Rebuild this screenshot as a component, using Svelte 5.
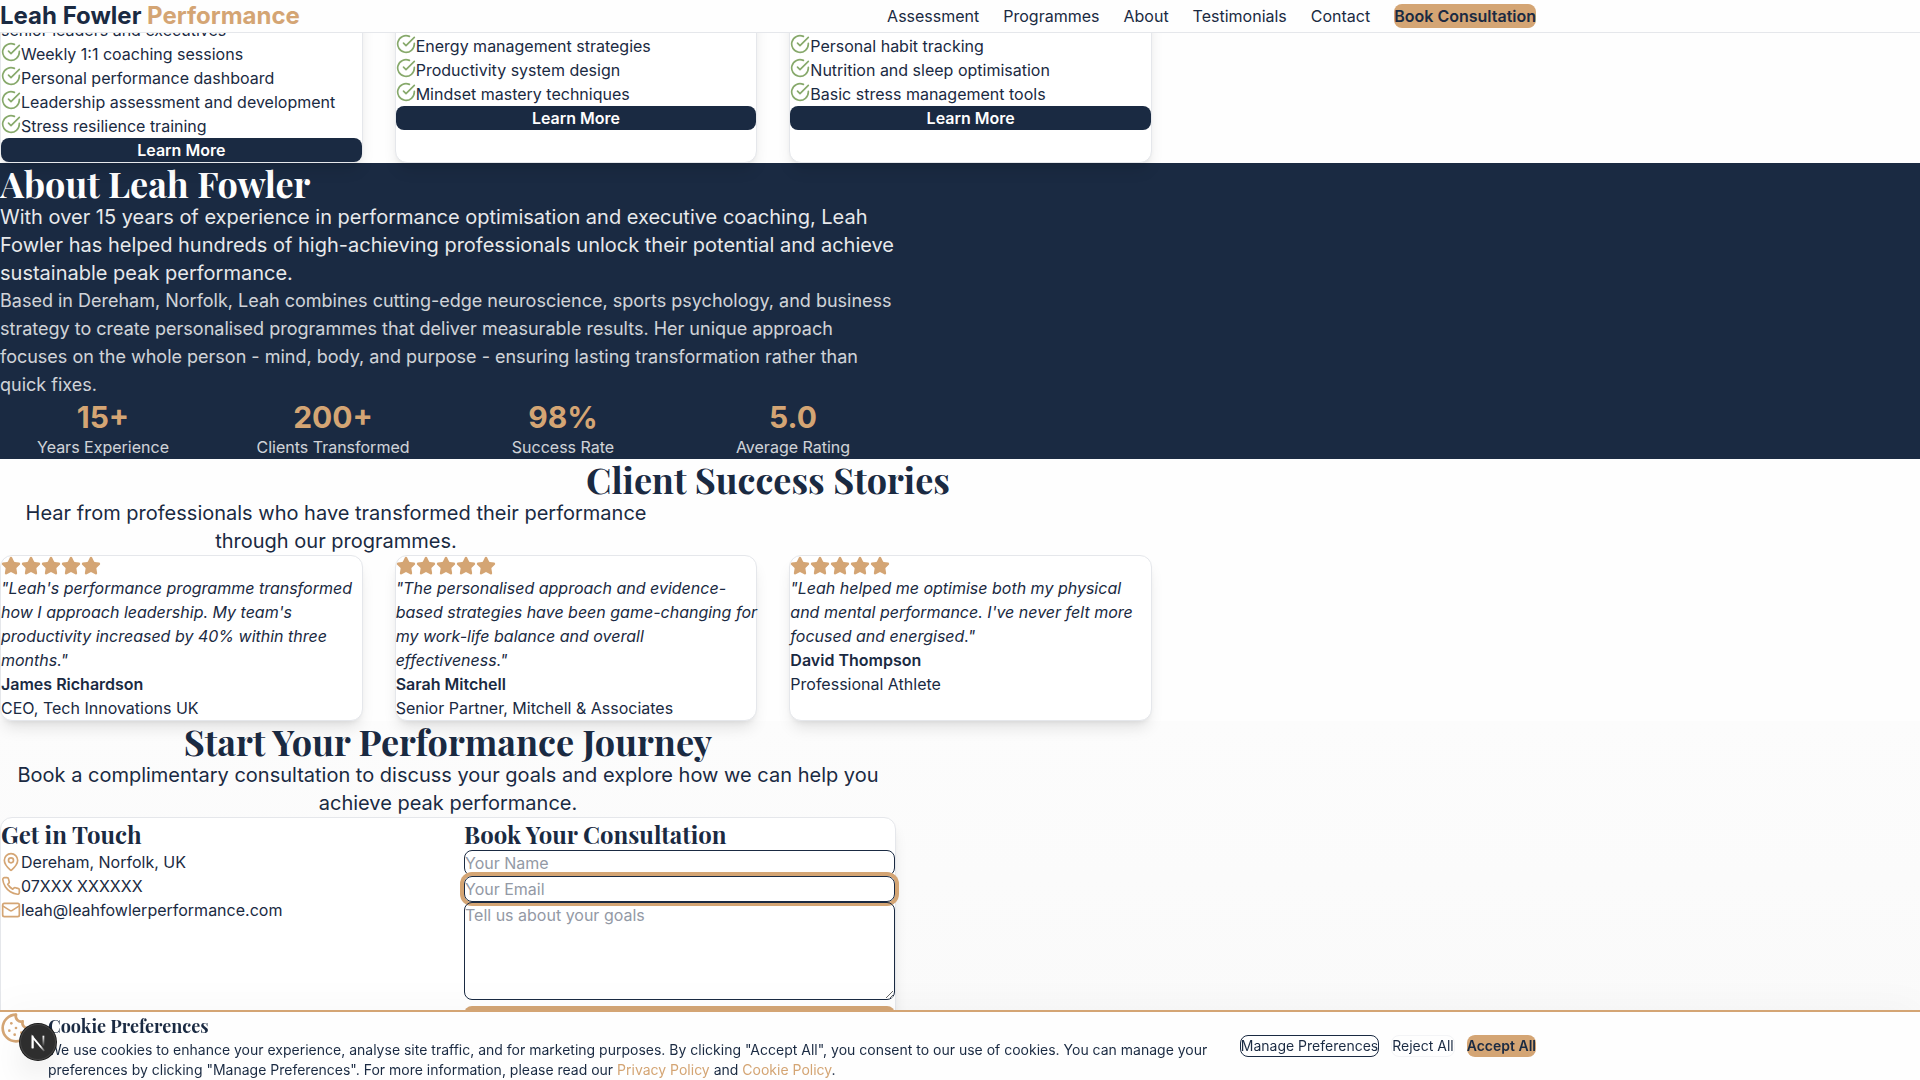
<script>
  const links = ['Assessment', 'Programmes', 'About', 'Testimonials', 'Contact'];

  const programmes = [
    {
      name: 'executive',
      intro: 'senior leaders and executives',
      items: [
        'Weekly 1:1 coaching sessions',
        'Personal performance dashboard',
        'Leadership assessment and development',
        'Stress resilience training'
      ]
    },
    {
      name: 'professional',
      intro: '',
      items: ['Energy management strategies', 'Productivity system design', 'Mindset mastery techniques']
    },
    {
      name: 'foundation',
      intro: '',
      items: ['Personal habit tracking', 'Nutrition and sleep optimisation', 'Basic stress management tools']
    }
  ];

  const stats = [
    { value: '15+', label: 'Years Experience' },
    { value: '200+', label: 'Clients Transformed' },
    { value: '98%', label: 'Success Rate' },
    { value: '5.0', label: 'Average Rating' }
  ];

  const stories = [
    {
      quote: "\"Leah's performance programme transformed how I approach leadership. My team's productivity increased by 40% within three months.\"",
      author: 'James Richardson',
      role: 'CEO, Tech Innovations UK'
    },
    {
      quote: '"The personalised approach and evidence-based strategies have been game-changing for my work-life balance and overall effectiveness."',
      author: 'Sarah Mitchell',
      role: 'Senior Partner, Mitchell & Associates'
    },
    {
      quote: '"Leah helped me optimise both my physical and mental performance. I\'ve never felt more focused and energised."',
      author: 'David Thompson',
      role: 'Professional Athlete'
    }
  ];
</script>

<div class="page">
  <header class="topbar">
    <div class="container topbar-row">
      <a class="brand" href="#top">Leah Fowler <span>Performance</span></a>
      <nav>
        {#each links as link}
          <a href={'#' + link.toLowerCase()}>{link}</a>
        {/each}
        <button class="gold" type="button">Book Consultation</button>
      </nav>
    </div>
  </header>

  <main>
    <section class="programmes" id="programmes">
      <div class="cards">
        {#each programmes as p}
          <article class="card programme" class:featured={p.intro}>
            <p class="intro">{p.intro}</p>
            <ul>
              {#each p.items as item}
                <li>
                  <svg class="icon sage" viewBox="0 0 24 24" aria-hidden="true">
                    <path d="M22 11.08V12a10 10 0 1 1-5.93-9.14" />
                    <path d="m9 11 3 3L22 4" />
                  </svg>
                  <span>{item}</span>
                </li>
              {/each}
            </ul>
            <button class="navy" type="button">Learn More</button>
          </article>
        {/each}
      </div>
    </section>

    <section class="about" id="about">
      <div class="narrow">
        <h2>About Leah Fowler</h2>
        <p class="lead">
          With over 15 years of experience in performance optimisation and executive coaching, Leah Fowler has helped
          hundreds of high-achieving professionals unlock their potential and achieve sustainable peak performance.
        </p>
        <p class="body">
          Based in Dereham, Norfolk, Leah combines cutting-edge neuroscience, sports psychology, and business strategy
          to create personalised programmes that deliver measurable results. Her unique approach focuses on the whole
          person - mind, body, and purpose - ensuring lasting transformation rather than quick fixes.
        </p>
        <div class="stats">
          {#each stats as s}
            <div>
              <div class="value">{s.value}</div>
              <div class="label">{s.label}</div>
            </div>
          {/each}
        </div>
      </div>
    </section>

    <section class="stories" id="testimonials">
      <div class="container center">
        <h2>Client Success Stories</h2>
        <p class="lead blurb">Hear from professionals who have transformed their performance through our programmes.</p>
      </div>
      <div class="cards">
        {#each stories as s}
          <article class="card">
            <div class="stars" role="img" aria-label="5 out of 5 stars">
              {#each Array(5) as _}
                <svg class="icon star" viewBox="0 0 24 24" aria-hidden="true">
                  <path d="M11.525 2.295a.53.53 0 0 1 .95 0l2.31 4.679a2.123 2.123 0 0 0 1.595 1.16l5.166.756a.53.53 0 0 1 .294.904l-3.736 3.638a2.123 2.123 0 0 0-.611 1.878l.882 5.14a.53.53 0 0 1-.771.56l-4.618-2.428a2.122 2.122 0 0 0-1.973 0L6.396 21.01a.53.53 0 0 1-.77-.56l.881-5.139a2.122 2.122 0 0 0-.611-1.879L2.16 9.795a.53.53 0 0 1 .294-.906l5.165-.755a2.122 2.122 0 0 0 1.597-1.16z" />
                </svg>
              {/each}
            </div>
            <p class="quote">{s.quote}</p>
            <div class="author">{s.author}</div>
            <div>{s.role}</div>
          </article>
        {/each}
      </div>
    </section>

    <section class="contact" id="contact">
      <div class="narrow">
        <div class="center">
          <h2>Start Your Performance Journey</h2>
          <p class="lead">
            Book a complimentary consultation to discuss your goals and explore how we can help you achieve peak
            performance.
          </p>
        </div>
        <div class="card contact-card">
          <div>
            <h3>Get in Touch</h3>
            <div class="detail">
              <svg class="icon tan" viewBox="0 0 24 24" aria-hidden="true">
                <path d="M20 10c0 4.993-5.539 10.193-7.399 11.799a1 1 0 0 1-1.202 0C9.539 20.193 4 14.993 4 10a8 8 0 0 1 16 0" />
                <circle cx="12" cy="10" r="3" />
              </svg>
              <span>Dereham, Norfolk, UK</span>
            </div>
            <div class="detail">
              <svg class="icon tan" viewBox="0 0 24 24" aria-hidden="true">
                <path d="M22 16.92v3a2 2 0 0 1-2.18 2 19.79 19.79 0 0 1-8.63-3.07 19.5 19.5 0 0 1-6-6 19.79 19.79 0 0 1-3.07-8.67A2 2 0 0 1 4.11 2h3a2 2 0 0 1 2 1.72 12.84 12.84 0 0 0 .7 2.81 2 2 0 0 1-.45 2.11L8.09 9.91a16 16 0 0 0 6 6l1.27-1.27a2 2 0 0 1 2.11-.45 12.84 12.84 0 0 0 2.81.7A2 2 0 0 1 22 16.92z" />
              </svg>
              <span>07XXX XXXXXX</span>
            </div>
            <div class="detail">
              <svg class="icon tan" viewBox="0 0 24 24" aria-hidden="true">
                <rect width="20" height="16" x="2" y="4" rx="2" />
                <path d="m22 7-8.97 5.7a1.94 1.94 0 0 1-2.06 0L2 7" />
              </svg>
              <span>leah@leahfowlerperformance.com</span>
            </div>
          </div>
          <form>
            <h3>Book Your Consultation</h3>
            <input type="text" placeholder="Your Name" aria-label="Your Name" />
            <input class="active" type="email" placeholder="Your Email" aria-label="Your Email" />
            <textarea rows="4" placeholder="Tell us about your goals" aria-label="Tell us about your goals"></textarea>
            <button class="gold" type="submit">Book Free Consultation</button>
          </form>
        </div>
      </div>
    </section>
  </main>

  <aside class="cookies" aria-label="Cookie Preferences">
    <div class="container cookie-row">
      <div class="cookie-copy">
        <svg class="cookie-icon tan" viewBox="0 0 24 24" aria-hidden="true">
          <path d="M12 2a10 10 0 1 0 10 10 4 4 0 0 1-5-5 4 4 0 0 1-5-5" />
          <path d="M8.5 8.5v.01" />
          <path d="M16 15.5v.01" />
          <path d="M12 12v.01" />
          <path d="M11 17v.01" />
          <path d="M7 14v.01" />
        </svg>
        <div>
          <h4>Cookie Preferences</h4>
          <p>
            We use cookies to enhance your experience, analyse site traffic, and for marketing purposes. By clicking
            "Accept All", you consent to our use of cookies. You can manage your preferences by clicking "Manage
            Preferences". For more information, please read our <a href="#privacy">Privacy Policy</a> and
            <a href="#cookie-policy">Cookie Policy</a>.
          </p>
        </div>
      </div>
      <div class="cookie-actions">
        <button class="outline" type="button">Manage Preferences</button>
        <button class="plain" type="button">Reject All</button>
        <button class="gold" type="button">Accept All</button>
      </div>
    </div>
  </aside>

  <button class="devtools" type="button" aria-label="Open dev tools">
    <svg viewBox="0 0 40 40" aria-hidden="true">
      <defs>
        <linearGradient id="n-diag" x1="20" y1="20" x2="29" y2="30" gradientUnits="userSpaceOnUse">
          <stop offset="0.4" stop-color="#fff" />
          <stop offset="1" stop-color="#fff" stop-opacity="0" />
        </linearGradient>
        <linearGradient id="n-stem" x1="27" y1="13" x2="27" y2="25" gradientUnits="userSpaceOnUse">
          <stop stop-color="#fff" />
          <stop offset="1" stop-color="#fff" stop-opacity="0" />
        </linearGradient>
      </defs>
      <path d="M14 27V14.5L27 30" fill="none" stroke="url(#n-diag)" stroke-width="2" />
      <path d="M14 27V13" stroke="#fff" stroke-width="2" />
      <path d="M26 13V26" stroke="url(#n-stem)" stroke-width="2" />
    </svg>
  </button>
</div>

<style>
  :global(body) {
    margin: 0;
    background: #fefefe;
  }

  .page {
    --navy: #1a2a42;
    --gold: #d4a574;
    --sage: #87a96b;
    --line: #e5e7eb;
    height: 100vh;
    overflow-y: auto;
    scrollbar-width: none;
    font-family: Inter, 'Liberation Sans', sans-serif;
    font-size: 16px;
    line-height: 24px;
    color: var(--navy);
    background: #fefefe;
    -webkit-font-smoothing: antialiased;
  }

  .page :is(h2, h3, h4, p, ul) {
    margin: 0;
    padding: 0;
  }

  .page :is(h2, h3, h4) {
    font-family: 'Playfair Display', 'Liberation Serif', serif;
    font-weight: 700;
  }

  h2 {
    font-size: 36px;
    line-height: 40px;
  }

  h3 {
    font-size: 24px;
    line-height: 32px;
  }

  a {
    color: inherit;
    text-decoration: none;
  }

  button,
  input,
  textarea {
    box-sizing: border-box;
    margin: 0;
    padding: 0;
    border: 0;
    border-radius: 8px;
    font: inherit;
    color: inherit;
    background: transparent;
  }

  button {
    cursor: pointer;
  }

  .gold {
    background: var(--gold);
    font-weight: 600;
  }

  .navy {
    background: var(--navy);
    color: #fefefe;
    font-weight: 600;
  }

  .container {
    max-width: 1536px;
  }

  .narrow {
    max-width: 896px;
  }

  .center {
    text-align: center;
  }

  .lead {
    font-size: 20px;
    line-height: 28px;
  }

  .icon {
    flex: none;
    width: 20px;
    height: 20px;
    fill: none;
    stroke-width: 2;
    stroke-linecap: round;
    stroke-linejoin: round;
  }

  .sage {
    stroke: var(--sage);
  }

  .tan {
    stroke: var(--gold);
  }

  .star {
    stroke: var(--gold);
    fill: var(--gold);
  }

  /* Header */
  .topbar {
    position: fixed;
    inset: 0 0 auto;
    z-index: 10;
    background: #fefefe;
    border-bottom: 1px solid var(--line);
  }

  .topbar-row {
    display: flex;
    align-items: center;
    justify-content: space-between;
  }

  .brand {
    font-size: 24px;
    line-height: 32px;
    font-weight: 700;
  }

  .brand span {
    color: var(--gold);
  }

  nav {
    display: flex;
    align-items: center;
    gap: 24px;
  }

  /* Cards */
  .cards {
    display: grid;
    grid-template-columns: repeat(3, 1fr);
    gap: 32px;
    max-width: 1152px;
  }

  .card {
    position: relative;
    border: 1px solid var(--line);
    border-radius: 12px;
    background: #fff;
    box-shadow:
      0 10px 15px -3px rgb(0 0 0 / 10%),
      0 4px 6px -4px rgb(0 0 0 / 10%);
  }

  .programme {
    padding-top: 9px;
  }

  .featured {
    padding-top: 17px;
  }

  .intro {
    min-height: 24px;
  }

  ul {
    list-style: none;
  }

  li,
  .detail,
  .stars {
    display: flex;
    align-items: flex-start;
  }

  .detail {
    align-items: center;
  }

  .programme button {
    display: block;
    width: 100%;
  }

  .page .quote {
    margin-right: -2px;
    font-style: italic;
  }

  .author {
    font-weight: 600;
  }

  /* About */
  .about {
    background: var(--navy);
    color: #fefefe;
  }

  .about .lead {
    opacity: 0.9;
  }

  .about .body {
    font-size: 18px;
    line-height: 28px;
    opacity: 0.8;
  }

  .stats {
    display: grid;
    grid-template-columns: repeat(4, 1fr);
    gap: 24px;
    text-align: center;
  }

  .value {
    font-size: 30px;
    line-height: 36px;
    font-weight: 700;
    color: var(--gold);
  }

  .label {
    opacity: 0.8;
  }

  .blurb {
    max-width: 672px;
  }

  /* Contact */
  .contact {
    background: linear-gradient(#fcfcfc, #fafafa);
  }

  .contact-card {
    display: grid;
    grid-template-columns: repeat(2, 1fr);
    gap: 32px;
  }

  input,
  textarea {
    display: block;
    width: 100%;
    border: 1px solid var(--navy);
  }

  input {
    height: 26px;
  }

  textarea {
    margin-bottom: 6px;
    resize: vertical;
  }

  input::placeholder,
  textarea::placeholder {
    color: #9399a5;
    opacity: 1;
  }

  .active {
    box-shadow: 0 0 0 4px var(--gold);
  }

  form button {
    display: block;
    width: 100%;
  }

  /* Cookie banner */
  .cookies {
    position: fixed;
    inset: auto 0 0;
    z-index: 20;
    border-top: 2px solid var(--gold);
    background: #fefefe;
    box-shadow: 0 -4px 40px rgb(0 0 0 / 3%);
    font-size: 14px;
    line-height: 20px;
  }

  .cookie-row {
    display: flex;
    align-items: center;
    gap: 24px;
  }

  .cookie-copy {
    flex: 1;
    display: flex;
    align-items: flex-start;
    gap: 16px;
  }

  .cookie-icon {
    flex: none;
    width: 32px;
    height: 32px;
    fill: none;
    stroke-width: 2;
    stroke-linecap: round;
    stroke-linejoin: round;
  }

  h4 {
    font-size: 18px;
    line-height: 28px;
  }

  .cookies p a {
    color: var(--gold);
  }

  .cookie-actions {
    display: flex;
    gap: 12px;
  }

  .cookie-actions button {
    white-space: nowrap;
  }

  .cookie-actions .outline {
    border: 1px solid var(--navy);
  }

  .cookie-actions .plain {
    border: 1px solid #f3f4f6;
  }

  .devtools {
    position: fixed;
    left: 20px;
    bottom: 20px;
    z-index: 30;
    width: 36px;
    height: 36px;
    border-radius: 50%;
    background: #2e2e2e;
    box-shadow:
      0 0 0 1px #171717,
      inset 0 0 0 1px #444,
      0 16px 32px -8px rgb(0 0 0 / 24%);
  }

  .devtools svg {
    display: block;
    width: 36px;
    height: 36px;
  }
</style>
